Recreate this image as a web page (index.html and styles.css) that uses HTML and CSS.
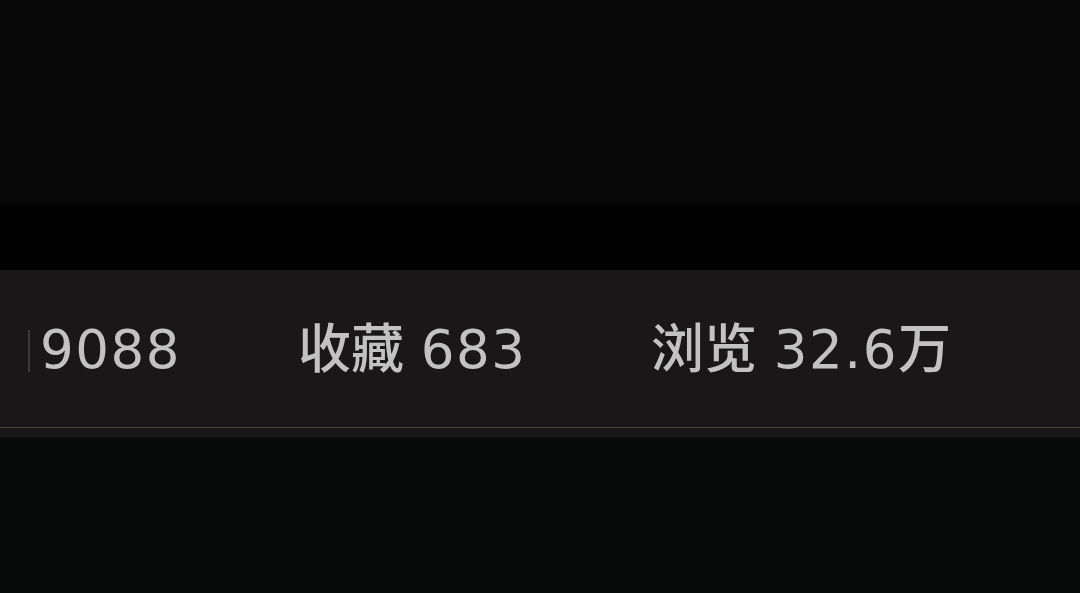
FILE: index.html
```html
<!DOCTYPE html>
<html lang="zh">
<head>
<meta charset="utf-8">
<title>Stats</title>
<link rel="stylesheet" href="styles.css">
</head>
<body>
<div class="page">
  <div class="top"></div>
  <div class="gap"></div>
  <div class="stats">
    <div class="row">
      <span class="caret"></span>
      <span class="stat s1"><span class="num">9088</span></span>
      <span class="stat s2"><span class="label">收藏</span> <span class="num">683</span></span>
      <span class="stat s3"><span class="label">浏览</span> <span class="num">32.6</span><span class="label">万</span></span>
    </div>
    <div class="rule"></div>
  </div>
  <div class="bottom"></div>
</div>
</body>
</html>
```

FILE: styles.css
```css
html, body {
  margin: 0;
  padding: 0;
  background: #090b0b;
}
.page {
  width: 1080px;
  height: 593px;
  display: flex;
  flex-direction: column;
  overflow: hidden;
}
.top {
  height: 203px;
  background: #080808;
}
.gap {
  height: 67px;
  background: #010201;
}
.stats {
  height: 167px;
  background: #191717;
  display: flex;
  flex-direction: column;
}
.row {
  height: 157px;
  display: flex;
  align-items: center;
  padding-left: 28px;
  font-family: "DejaVu Sans", "Noto Sans CJK SC", sans-serif;
  font-size: 53px;
  color: #c2c2c2;
  white-space: nowrap;
}
.caret {
  width: 2px;
  height: 42px;
  background: #3a3a3a;
  margin-right: 10px;
  margin-top: 4px;
}
.stat {
  display: block;
  line-height: 1;
  margin-top: 2px;
}
.num {
  letter-spacing: 1.5px;
}
.label {
  font-weight: 500;
}
.s1 { width: 258px; }
.s2 { width: 353px; }
.rule {
  height: 1px;
  background: #4a4236;
}
.bottom {
  flex: 1;
  background: #090b0b;
}
```
